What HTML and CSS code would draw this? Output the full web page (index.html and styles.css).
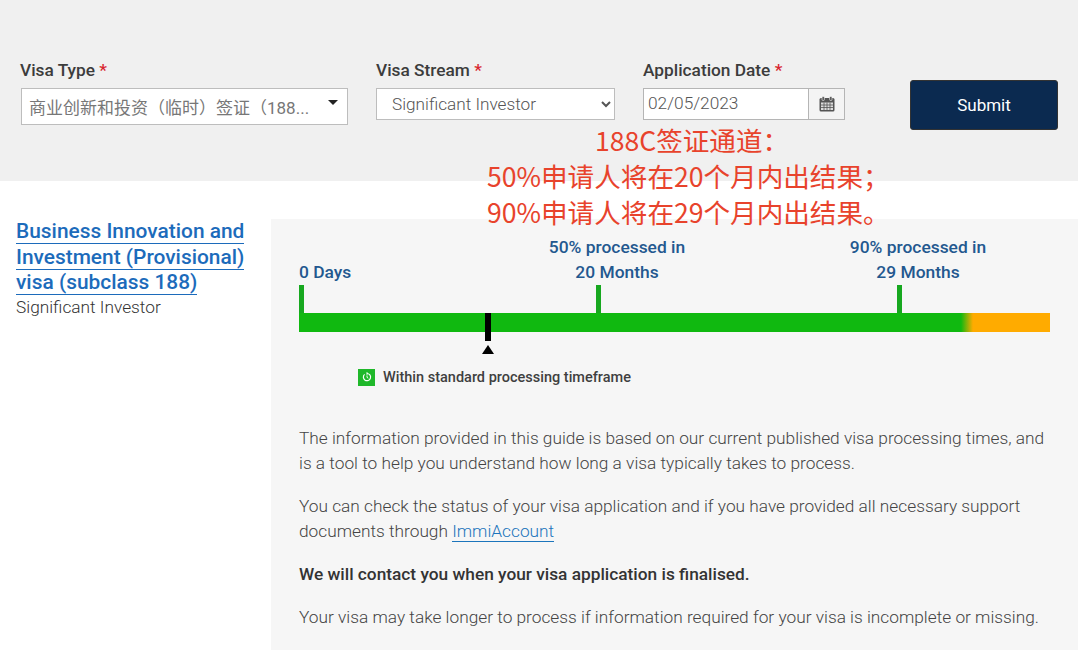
FILE: index.html
```html
<!DOCTYPE html>
<html lang="en">
<head>
  <meta charset="UTF-8">
  <title>Visa processing time guide</title>
  <link rel="stylesheet" href="styles.css">
</head>
<body>
  <form class="search-panel">
    <div class="field field-type">
      <label>Visa Type <span class="req">*</span></label>
      <div class="combo">
        <span class="combo-text">商业创新和投资（临时）签证（188...</span>
        <span class="combo-caret"></span>
      </div>
    </div>
    <div class="field field-stream">
      <label for="stream">Visa Stream <span class="req">*</span></label>
      <select id="stream" class="stream-select">
        <option>Significant Investor</option>
      </select>
    </div>
    <div class="field field-date">
      <label for="date">Application Date <span class="req">*</span></label>
      <div class="date-group">
        <input id="date" type="text" value="02/05/2023">
        <span class="date-btn">
          <svg width="16" height="16" viewBox="0 0 16 16">
            <rect x="0.5" y="2" width="15" height="13.5" rx="1.5" fill="#555"/>
            <rect x="3" y="0.5" width="2.4" height="4" rx="1" fill="#555" stroke="#fff" stroke-width="0.6"/>
            <rect x="10.6" y="0.5" width="2.4" height="4" rx="1" fill="#555" stroke="#fff" stroke-width="0.6"/>
            <path d="M2 6.5h12v7.5H2z" fill="#ddd"/>
            <path d="M2 9h12M2 11.5h12M5 6.5V14M8 6.5V14M11 6.5V14" stroke="#555" stroke-width="0.8"/>
          </svg>
        </span>
      </div>
    </div>
    <button type="button" class="submit-btn">Submit</button>
  </form>

  <div class="note">
    <div class="note-head">188C签证通道：</div>
    <div>50%申请人将在20个月内出结果；</div>
    <div>90%申请人将在29个月内出结果。</div>
  </div>

  <main class="result">
    <aside class="result-side">
      <h2><a href="#">Business Innovation and Investment (Provisional) visa (subclass 188)</a></h2>
      <p>Significant Investor</p>
    </aside>
    <section class="result-body">
      <div class="timeline">
        <div class="mark mark-0"><span>0 Days</span></div>
        <div class="mark mark-50"><span>50% processed in<br>20 Months</span></div>
        <div class="mark mark-90"><span>90% processed in<br>29 Months</span></div>
        <div class="bar"></div>
        <div class="pointer"></div>
      </div>
      <div class="legend">
        <span class="legend-icon">
          <svg width="12" height="12" viewBox="0 0 12 12" fill="none" stroke="#fff" stroke-width="1.2">
            <path d="M3.6 3.4a3.6 3.6 0 1 0 2.4-.9"/>
            <path d="M6 1.2v2.6" stroke-width="1"/>
            <path d="M6 4.4v2l1.3.8" stroke-width="0.9"/>
          </svg>
        </span>
        Within standard processing timeframe
      </div>
      <p>The information provided in this guide is based on our current published visa processing times, and is a tool to help you understand how long a visa typically takes to process.</p>
      <p>You can check the status of your visa application and if you have provided all necessary support documents through <a href="#">ImmiAccount</a></p>
      <p class="strong">We will contact you when your visa application is finalised.</p>
      <p>Your visa may take longer to process if information required for your visa is incomplete or missing.</p>
    </section>
  </main>
</body>
</html>
```

FILE: styles.css
```css
* {
  box-sizing: border-box;
}
html, body {
  margin: 0;
  height: 650px;
  overflow: hidden;
}
body {
  position: relative;
  background: #fff;
  font-family: Roboto, "Noto Sans CJK SC", sans-serif;
  color: #555;
}
.search-panel {
  display: flex;
  align-items: flex-start;
  width: 1078px;
  height: 181px;
  padding: 60px 0 0 20px;
  background: #f0f0f0;
}
.field label {
  display: block;
  height: 20px;
  margin-bottom: 8px;
  font-size: 17.3px;
  line-height: 20px;
  font-weight: 500;
  color: #3c3c3c;
}
.req {
  color: #d8262f;
}
.field-type {
  width: 328px;
  margin-right: 28px;
}
.field-stream {
  width: 239px;
  margin-right: 28px;
}
.field-date {
  width: 202px;
  margin-right: 65px;
}
.combo {
  display: flex;
  align-items: center;
  justify-content: space-between;
  width: 327px;
  margin-left: 1px;
  height: 37px;
  padding: 0 9px 0 7px;
  background: #fff;
  border: 1px solid #bdbdbd;
}
.combo-text {
  font-size: 17px;
  color: #777;
  white-space: nowrap;
}
.combo-caret {
  width: 0;
  height: 0;
  margin-bottom: 8px;
  border-left: 5px solid transparent;
  border-right: 5px solid transparent;
  border-top: 5px solid #222;
}
.stream-select {
  display: block;
  width: 100%;
  height: 32px;
  padding: 0 0 0 11px;
  background: #fff;
  border: 1px solid #bdbdbd;
  border-radius: 0;
  font-family: inherit;
  font-size: 17.2px;
  font-weight: 300;
  color: #555;
}
.date-group {
  display: flex;
  height: 32px;
  border: 1px solid #b5b5b5;
  background: #fff;
}
.date-group input {
  flex: 1;
  min-width: 0;
  padding: 0 0 2px 4px;
  border: 0;
  border-right: 1px solid #b5b5b5;
  font-family: inherit;
  font-size: 17.3px;
  font-weight: 300;
  color: #555;
}
.date-btn {
  display: flex;
  align-items: center;
  justify-content: center;
  width: 35px;
  background: #f4f4f4;
}
.submit-btn {
  width: 148px;
  height: 50px;
  margin-top: 20px;
  background: #0b2a50;
  border: 1px solid #333;
  border-radius: 3px;
  color: #fff;
  font-family: inherit;
  font-size: 17px;
}
.note {
  position: absolute;
  left: 487px;
  top: 122px;
  width: 400px;
  text-align: center;
  white-space: nowrap;
  z-index: 2;
  font-family: "Noto Sans CJK SC", sans-serif;
  font-size: 26.6px;
  line-height: 36px;
  color: #e8432c;
}
.note-head {
  margin-left: 10px;
}
.result {
  display: flex;
  margin-top: 38px;
}
.result-side {
  width: 271px;
  padding-left: 16px;
}
.result-side h2 {
  width: 235px;
  margin: 0;
  font-size: 20.9px;
  line-height: 25.5px;
  font-weight: 500;
}
.result-side a {
  color: #1c6bbb;
  text-decoration: none;
  border-bottom: 1px solid #1c6bbb;
}
.result-side p {
  margin: -1px 0 0;
  font-size: 17.3px;
  line-height: 25px;
  font-weight: 300;
  color: #333;
}
.result-body {
  width: 807px;
  height: 431px;
  padding: 0 28px;
  background: #f6f6f6;
}
.timeline {
  position: relative;
  height: 131px;
}
.mark {
  position: absolute;
  top: 66px;
  width: 5px;
  height: 30px;
  background: #17a81f;
}
.mark span {
  position: absolute;
  bottom: 100%;
  left: 21px;
  transform: translateX(-50%);
  font-size: 17.4px;
  line-height: 25px;
  font-weight: 500;
  color: #23588f;
  text-align: center;
  white-space: nowrap;
}
.mark-0 {
  left: 0;
}
.mark-0 span {
  left: 0;
  transform: none;
}
.mark-50 {
  left: 297px;
}
.mark-90 {
  left: 598px;
}
.bar {
  position: absolute;
  top: 94px;
  left: 0;
  width: 751px;
  height: 19px;
  background: linear-gradient(to right, #10b910 0, #10b910 662px, #ffab00 674px, #ffab00 100%);
}
.pointer {
  position: absolute;
  top: 94px;
  left: 186px;
  width: 6px;
  height: 28px;
  background: #000;
}
.pointer::after {
  content: "";
  position: absolute;
  left: -3px;
  top: 32px;
  border-left: 6px solid transparent;
  border-right: 6px solid transparent;
  border-bottom: 9px solid #000;
}
.legend {
  display: flex;
  align-items: center;
  gap: 8px;
  height: 18px;
  margin: 18px 0 0 59px;
  font-size: 14.5px;
  font-weight: 500;
  color: #3f3f3f;
}
.legend-icon {
  display: flex;
  align-items: center;
  justify-content: center;
  width: 17px;
  height: 17px;
  background: #1fb82a;
}
.result-body p {
  margin: 0 0 18px;
  font-size: 17.3px;
  line-height: 25px;
  font-weight: 300;
  color: #444;
}
.result-body .legend + p {
  margin-top: 40px;
}
.result-body p.strong {
  font-weight: 500;
  color: #333;
}
.result-body p a {
  color: #1c75bc;
  text-decoration: none;
  border-bottom: 1px solid #1c75bc;
}
```
